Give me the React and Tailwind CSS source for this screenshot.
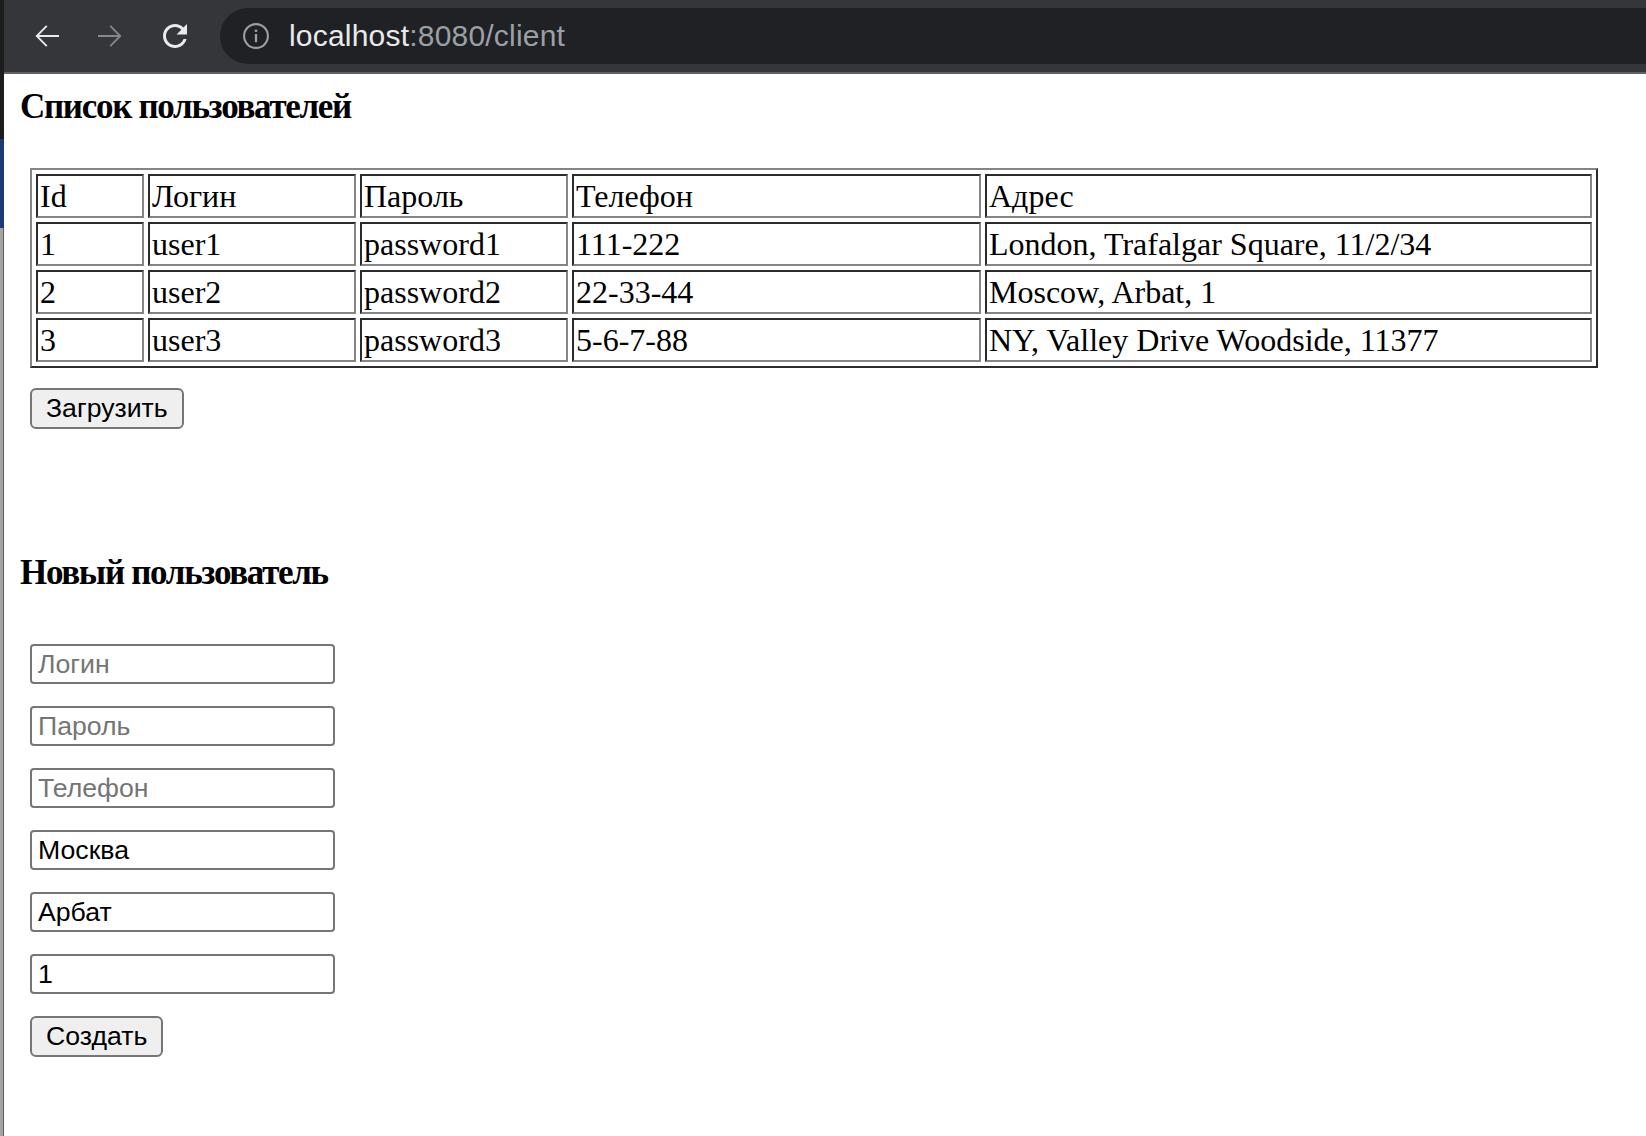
import { useState } from 'react';

const users = [
  { id: 1, login: 'user1', password: 'password1', phone: '111-222', address: 'London, Trafalgar Square, 11/2/34' },
  { id: 2, login: 'user2', password: 'password2', phone: '22-33-44', address: 'Moscow, Arbat, 1' },
  { id: 3, login: 'user3', password: 'password3', phone: '5-6-7-88', address: 'NY, Valley Drive Woodside, 11377' },
];

const cell =
  'border-2 border-t-[#2b2b2b] border-l-[#2b2b2b] border-b-[#858585] border-r-[#858585] px-[2px] py-[2px] text-[32px] leading-[36px] text-left align-middle font-normal whitespace-nowrap';

const field =
  'block w-[305px] h-[40px] border-2 border-[#767676] rounded-[4px] px-[6px] bg-white text-black text-[26.67px] leading-none placeholder:text-[#757575] outline-none';

const btn =
  'h-[41px] px-[14px] rounded-[6px] border-2 border-[#767676] bg-[#efefef] text-black text-[26.67px] leading-none';

const heading = 'text-[35px] leading-[43px] font-bold tracking-[-1.3px]';

function BrowserBar() {
  return (
    <header className="h-[74px] bg-[#35363a] border-b-2 border-[#606165] flex items-start pt-[8px]">
      {/* back */}
      <div className="w-[48px] h-[56px] ml-[19px] flex items-center justify-center text-[#e8eaed]">
        <svg width="36" height="36" viewBox="0 0 24 24" fill="currentColor">
          <path d="M20 11.3H6.7l5.6-5.6-.9-.9L4.3 12l7.1 7.2.9-.9-5.6-5.6H20z" />
        </svg>
      </div>
      {/* forward */}
      <div className="w-[48px] h-[56px] ml-[15px] flex items-center justify-center text-[#86878b]">
        <svg width="36" height="36" viewBox="0 0 24 24" fill="currentColor">
          <path d="M4 11.3h13.3l-5.6-5.6.9-.9 7.1 7.2-7.1 7.2-.9-.9 5.6-5.6H4z" />
        </svg>
      </div>
      {/* reload */}
      <div className="w-[48px] h-[56px] ml-[17px] flex items-center justify-center text-[#e8eaed]">
        <svg width="36" height="36" viewBox="0 0 24 24" fill="currentColor">
          <path d="M17.65 6.35C16.2 4.9 14.21 4 12 4c-4.42 0-7.99 3.58-7.99 8s3.57 8 7.99 8c3.73 0 6.84-2.55 7.73-6h-2.08c-.82 2.33-3.04 4-5.65 4-3.31 0-6-2.69-6-6s2.69-6 6-6c1.66 0 3.14.69 4.22 1.78L13 11h7V4l-2.35 2.35z" />
        </svg>
      </div>
      {/* address pill */}
      <div className="flex-1 h-[56px] ml-[21px] bg-[#202124] rounded-l-full flex items-center">
        <svg className="ml-[22px] shrink-0" width="28" height="28" viewBox="0 0 24 24" fill="none">
          <circle cx="12" cy="12" r="10.2" stroke="#9aa0a6" strokeWidth="1.8" />
          <rect x="11" y="10.3" width="2" height="7" rx="0.4" fill="#9aa0a6" />
          <circle cx="12" cy="7.6" r="1.2" fill="#9aa0a6" />
        </svg>
        <span className="ml-[19px] font-['Liberation_Sans',Arial,sans-serif] text-[30px] leading-none tracking-[0.2px]">
          <span className="text-[#e8eaed]">localhost</span>
          <span className="text-[#9aa0a6]">:8080/client</span>
        </span>
      </div>
    </header>
  );
}

export default function App() {
  const [rows] = useState(users);

  return (
    <div className="flex min-h-screen bg-white">
      {/* edge of the window behind */}
      <div className="w-[4px] shrink-0 flex flex-col">
        <div className="h-[139px] bg-[#1c1c1c]" />
        <div className="h-[89px] bg-[#1d3a78]" />
        <div className="flex-1 bg-[#a4a4a4] border-r border-[#5a5a5a]" />
      </div>

      <div className="flex-1 flex flex-col">
        <BrowserBar />

        <main className="px-[16px] font-['Liberation_Serif','Times_New_Roman',serif] text-black">
          <h3 className={`mt-[11px] ${heading}`}>Список пользователей</h3>

          <div className="pl-[10px]">
            <table className="mt-[40px] w-[1568px] table-fixed border-separate border-spacing-[4px] border-2 border-t-[#858585] border-l-[#858585] border-b-[#2b2b2b] border-r-[#2b2b2b]">
              <tbody>
                <tr>
                  <td className={`${cell} w-[108px]`}>Id</td>
                  <td className={`${cell} w-[208px]`}>Логин</td>
                  <td className={`${cell} w-[208px]`}>Пароль</td>
                  <td className={`${cell} w-[409px]`}>Телефон</td>
                  <td className={`${cell} w-[607px]`}>Адрес</td>
                </tr>
                {rows.map((u) => (
                  <tr key={u.id}>
                    <td className={cell}>{u.id}</td>
                    <td className={cell}>{u.login}</td>
                    <td className={cell}>{u.password}</td>
                    <td className={cell}>{u.phone}</td>
                    <td className={cell}>{u.address}</td>
                  </tr>
                ))}
              </tbody>
            </table>

            <button className={`${btn} mt-[20px] font-['Liberation_Sans',Arial,sans-serif]`}>Загрузить</button>
          </div>

          <h3 className={`mt-[122px] ${heading}`}>Новый пользователь</h3>

          <div className="pl-[10px] mt-[50px] flex flex-col items-start gap-[22px] font-['Liberation_Sans',Arial,sans-serif]">
            <input className={field} placeholder="Логин" />
            <input className={field} placeholder="Пароль" />
            <input className={field} placeholder="Телефон" />
            <input className={field} placeholder="Город" defaultValue="Москва" />
            <input className={field} placeholder="Улица" defaultValue="Арбат" />
            <input className={field} placeholder="Дом" defaultValue="1" />
            <button className={btn}>Создать</button>
          </div>
        </main>
      </div>
    </div>
  );
}
